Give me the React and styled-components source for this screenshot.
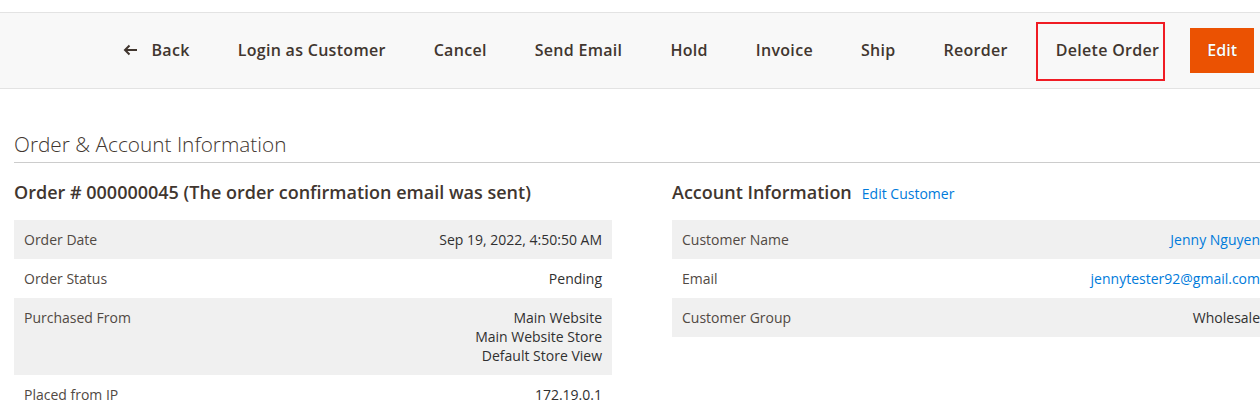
import React from 'react';
import styled, { createGlobalStyle } from 'styled-components';

const GlobalStyle = createGlobalStyle`
  html, body {
    margin: 0;
    padding: 0;
    overflow: hidden;
    background: #fff;
  }
  body {
    font-family: 'Open Sans', 'Liberation Sans', sans-serif;
    color: #303030;
  }
`;

const Page = styled.div`
  width: 1284px;
  padding-top: 12px;
`;

const Toolbar = styled.div`
  height: 75px;
  display: flex;
  align-items: center;
  justify-content: flex-end;
  gap: 8px;
  padding-right: 30px;
  background: #f8f8f8;
  border-top: 1px solid #e3e3e3;
  border-bottom: 1px solid #e3e3e3;
`;

const ActionButton = styled.button`
  position: relative;
  height: 44px;
  padding: 0 20px 2px;
  border: none;
  background: transparent;
  display: flex;
  align-items: center;
  gap: 14px;
  font-family: inherit;
  font-size: 16px;
  letter-spacing: 0.3px;
  font-weight: 600;
  color: #41362f;
  cursor: pointer;
  white-space: nowrap;

  ${(props) =>
    props.marked &&
    `
    &::after {
      content: '';
      position: absolute;
      left: 0;
      right: 14px;
      top: -7px;
      bottom: -8px;
      border: 2px solid #f01c24;
    }
  `}
`;

const PrimaryButton = styled.button`
  height: 45px;
  margin-left: 3px;
  padding: 0 17px 1px;
  border: none;
  background: #eb5202;
  color: #fff;
  font-family: inherit;
  font-size: 16px;
  font-weight: 600;
  text-shadow: 0 0 1px rgba(0, 0, 0, 0.4);
  cursor: pointer;
`;

const Content = styled.div`
  padding: 0 14px;
`;

const SectionTitle = styled.h2`
  margin: 41px 0 0;
  padding-bottom: 4px;
  font-size: 20.8px;
  line-height: 28px;
  font-weight: 300;
  color: #41362f;
  border-bottom: 1px solid #cccccc;
`;

const Columns = styled.div`
  display: grid;
  grid-template-columns: 598px 598px;
  column-gap: 60px;
  margin-top: 17px;
`;

const Column = styled.div`
  display: flex;
  flex-direction: column;
`;

const BlockTitle = styled.div`
  display: flex;
  align-items: baseline;
  gap: 10px;
  height: 24px;
  margin-bottom: 16px;
`;

const BlockHeading = styled.span`
  font-size: 18px;
  line-height: 24px;
  font-weight: 600;
  color: #41362f;
`;

const Link = styled.a`
  font-size: 14px;
  color: #007bdb;
  text-decoration: none;
`;

const Table = styled.table`
  width: 100%;
  border-collapse: collapse;
  font-size: 14px;
  line-height: 19px;
`;

const Row = styled.tr`
  background: ${(props) => (props.striped ? '#f0f0f0' : '#fff')};
`;

const Label = styled.th`
  padding: 10px;
  text-align: left;
  vertical-align: top;
  font-weight: 400;
  color: #514943;
`;

const Value = styled.td`
  padding: 10px;
  text-align: right;
  vertical-align: top;
  color: #303030;
`;

const BackArrow = () => (
  <svg width="15" height="12" viewBox="0 0 15 12" fill="none">
    <path d="M14 6H2.5M6.5 1.5L2 6l4.5 4.5" stroke="#41362f" strokeWidth="2" />
  </svg>
);

const orderRows = [
  { label: 'Order Date', value: ['Sep 19, 2022, 4:50:50 AM'] },
  { label: 'Order Status', value: ['Pending'] },
  { label: 'Purchased From', value: ['Main Website', 'Main Website Store', 'Default Store View'] },
  { label: 'Placed from IP', value: ['172.19.0.1'] },
];

const accountRows = [
  { label: 'Customer Name', value: ['Jenny Nguyen'], link: true },
  { label: 'Email', value: ['jennytester92@gmail.com'], link: true },
  { label: 'Customer Group', value: ['Wholesale'] },
];

const InfoTable = ({ rows }) => (
  <Table>
    <tbody>
      {rows.map((row, i) => (
        <Row key={row.label} striped={i % 2 === 0}>
          <Label>{row.label}</Label>
          <Value>
            {row.value.map((line, j) => (
              <div key={j}>{row.link ? <Link href="#">{line}</Link> : line}</div>
            ))}
          </Value>
        </Row>
      ))}
    </tbody>
  </Table>
);

const actions = ['Login as Customer', 'Cancel', 'Send Email', 'Hold', 'Invoice', 'Ship', 'Reorder'];

export default function App() {
  return (
    <Page>
      <GlobalStyle />
      <Toolbar>
        <ActionButton>
          <BackArrow />
          Back
        </ActionButton>
        {actions.map((a) => (
          <ActionButton key={a}>{a}</ActionButton>
        ))}
        <ActionButton marked>Delete Order</ActionButton>
        <PrimaryButton>Edit</PrimaryButton>
      </Toolbar>
      <Content>
        <SectionTitle>Order &amp; Account Information</SectionTitle>
        <Columns>
          <Column>
            <BlockTitle>
              <BlockHeading>Order # 000000045 (The order confirmation email was sent)</BlockHeading>
            </BlockTitle>
            <InfoTable rows={orderRows} />
          </Column>
          <Column>
            <BlockTitle>
              <BlockHeading>Account Information</BlockHeading>
              <Link href="#">Edit Customer</Link>
            </BlockTitle>
            <InfoTable rows={accountRows} />
          </Column>
        </Columns>
      </Content>
    </Page>
  );
}
